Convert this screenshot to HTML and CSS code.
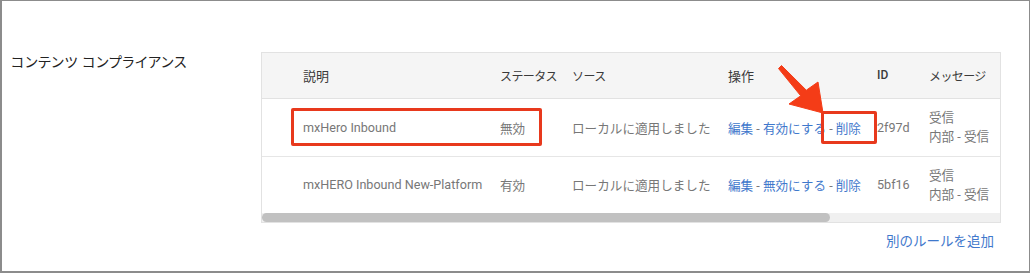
FILE: index.html
```html
<!DOCTYPE html>
<html lang="ja">
<head>
  <meta charset="UTF-8" />
  <title>コンテンツ コンプライアンス</title>
  <link rel="stylesheet" href="styles.css">
</head>
<body>
  <div class="frame">
    <div class="section">
      <div class="section-title">コンテンツ コンプライアンス</div>

      <div class="section-body">
        <div class="table-area">
          <div class="table-box">
            <div class="table-scroll">
              <table class="rules">
                <colgroup>
                  <col class="col-desc">
                  <col class="col-status">
                  <col class="col-source">
                  <col class="col-action">
                  <col class="col-id">
                  <col class="col-msg">
                </colgroup>
                <thead>
                  <tr>
                    <th>説明</th>
                    <th class="kana">ステータス</th>
                    <th class="kana">ソース</th>
                    <th>操作</th>
                    <th class="id-head">ID</th>
                    <th class="kana">メッセージ</th>
                  </tr>
                </thead>
                <tbody>
                  <tr>
                    <td>mxHero Inbound</td>
                    <td>無効</td>
                    <td>ローカルに適用しました</td>
                    <td><a href="#">編集</a> - <a href="#">有効にする</a> - <a href="#">削除</a></td>
                    <td>2f97d</td>
                    <td class="msg">受信<br>内部 - 受信</td>
                  </tr>
                  <tr>
                    <td>mxHERO Inbound New-Platform</td>
                    <td>有効</td>
                    <td>ローカルに適用しました</td>
                    <td><a href="#">編集</a> - <a href="#">無効にする</a> - <a href="#">削除</a></td>
                    <td>5bf16</td>
                    <td class="msg">受信<br>内部 - 受信</td>
                  </tr>
                </tbody>
              </table>
            </div>
            <div class="scrollbar"><div class="scrollbar-thumb"></div></div>
          </div>

          <!-- annotation overlays -->
          <div class="mark mark-row"></div>
          <div class="mark mark-delete"></div>
          <svg class="arrow" width="60" height="60" viewBox="0 0 60 60">
            <polygon points="8.5,8.5 11.5,5.5 36.3,30.2 48,22 53,53 19,44 30.7,35.8"
                     fill="#f43c17" stroke="#f43c17" stroke-width="1" stroke-linejoin="round"/>
          </svg>
        </div>

        <div class="add-rule"><a href="#">別のルールを追加</a></div>
      </div>
    </div>
  </div>
</body>
</html>
```

FILE: styles.css
```css
* {
  box-sizing: border-box;
}

body {
  margin: 0;
  font-family: Roboto, "Noto Sans CJK JP", sans-serif;
  background: #fff;
}

a {
  color: #3f78cc;
  text-decoration: none;
}

.frame {
  width: 1030px;
  height: 273px;
  border: 1px solid #8c8c8c;
  border-left-width: 2px;
  border-bottom-width: 2px;
  padding: 51px 0 0 9px;
  overflow: hidden;
}

.section {
  display: flex;
}

.section-title {
  width: 250px;
  font-size: 14px;
  line-height: 20px;
  color: #222;
  font-feature-settings: "palt";
  letter-spacing: 0.65px;
}

.section-body {
  width: 740px;
}

.table-area {
  position: relative;
}

.table-box {
  border: 1px solid #e2e2e2;
}

.table-scroll {
  overflow: hidden;
}

.scrollbar {
  height: 9px;
  background: #f0f0f0;
}

.scrollbar-thumb {
  width: 568px;
  height: 9px;
  background: #c1c1c1;
  border-radius: 5px;
}

.rules {
  width: 960px;
  table-layout: fixed;
  border-collapse: collapse;
  font-size: 12.6px;
}

.col-desc { width: 228px; }
.col-status { width: 72px; }
.col-source { width: 156px; }
.col-action { width: 149px; }
.col-id { width: 52px; }
.col-msg { width: 303px; }

.rules th,
.rules td {
  padding: 0 0 0 10px;
  text-align: left;
  white-space: nowrap;
  vertical-align: middle;
}

.rules th:first-child,
.rules td:first-child {
  padding-left: 41px;
}

.rules th {
  height: 45px;
  background: #f5f5f5;
  color: #3a3a3a;
  font-weight: 400;
  font-size: 13px;
  border-bottom: 1px solid #e2e2e2;
}

.rules th.kana {
  font-size: 12px;
  letter-spacing: -0.6px;
}

.rules th.id-head {
  font-size: 12px;
  font-weight: 500;
}

.rules td {
  height: 58px;
  color: #777;
  border-bottom: 1px solid #e6e6e6;
}

.rules tbody tr:last-child td {
  height: 57px;
  border-bottom: none;
}

.rules td.msg {
  line-height: 19px;
}

.mark {
  position: absolute;
  border: 3px solid #e8391d;
  border-radius: 2px;
}

.mark-row {
  left: 30px;
  top: 56px;
  width: 251px;
  height: 38px;
}

.mark-delete {
  left: 560px;
  top: 59px;
  width: 56px;
  height: 33px;
}

.arrow {
  position: absolute;
  left: 509px;
  top: 8px;
}

.add-rule {
  text-align: right;
  padding: 8px 7px 0 0;
  font-size: 13.5px;
  line-height: 20px;
}
```
